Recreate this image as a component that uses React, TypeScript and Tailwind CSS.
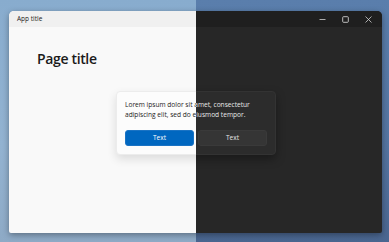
import React from "react";

function Scene({ dark }: { dark: boolean }) {
  return (
    <div
      className={
        "w-[389px] h-[242px] pt-[11px] pl-[9px] " +
        (dark
          ? "bg-[linear-gradient(180deg,#5a7eac_0%,#5474a0_60%,#4a6690_100%)]"
          : "bg-[linear-gradient(180deg,#88acce_0%,#93b3d1_60%,#8eaac6_100%)]")
      }
      style={{ fontFamily: '"Segoe UI", "Open Sans", "Noto Sans", sans-serif' }}
    >
      <div
        className={
          "w-[373px] h-[222px] rounded-t-[5px] rounded-b-[2px] overflow-hidden flex flex-col shadow-[0_2px_6px_rgba(0,0,0,0.35)] " +
          (dark ? "bg-[#272727]" : "bg-[#f9f9f9]")
        }
      >
        <div
          className={
            "h-[16px] flex items-center pl-[8px] shrink-0 " +
            (dark ? "bg-[#1f1f1f] text-[#e6e6e6]" : "bg-[#f0f0f0] text-[#1a1a1a]")
          }
        >
          <span className="text-[6.5px] leading-none">App title</span>
          <div className="ml-auto flex items-center h-full">
            <div className="w-[23px] h-full flex items-center justify-center">
              <svg width="7" height="7" viewBox="0 0 7 7">
                <path d="M0.5 3.5H6.5" stroke={dark ? "#d0d0d0" : "#333"} strokeWidth="0.8" />
              </svg>
            </div>
            <div className="w-[23px] h-full flex items-center justify-center">
              <svg width="7" height="7" viewBox="0 0 7 7">
                <rect x="0.7" y="0.7" width="5.6" height="5.6" rx="0.8" fill="none" stroke={dark ? "#d0d0d0" : "#333"} strokeWidth="0.9" />
              </svg>
            </div>
            <div className="w-[23px] h-full flex items-center justify-center mr-[2px]">
              <svg width="7" height="7" viewBox="0 0 7 7">
                <path d="M0.5 0.5L6.5 6.5M6.5 0.5L0.5 6.5" stroke={dark ? "#d0d0d0" : "#333"} strokeWidth="0.8" />
              </svg>
            </div>
          </div>
        </div>
        <div className="flex-1 flex flex-col">
          <div
            className={
              "pl-[28px] pt-[22px] text-[14px] leading-[20px] font-semibold tracking-[-0.35px] " +
              (dark ? "text-white" : "text-[#1b1b1b]")
            }
          >
            Page title
          </div>
          <div
            className={
              "mt-[22px] ml-[107px] w-[160px] h-[64px] rounded-[4px] p-[8px] flex flex-col " +
              (dark
                ? "bg-[#2c2c2c] border border-[#333] shadow-[0_4px_10px_rgba(0,0,0,0.35)]"
                : "bg-[#fcfcfc] border border-[#ececec] shadow-[0_4px_10px_rgba(0,0,0,0.12)]")
            }
          >
            <p
              className={
                "text-[6.6px] leading-[10px] " + (dark ? "text-[#e8e8e8]" : "text-[#1b1b1b]")
              }
            >
              Lorem ipsum dolor sit amet, consectetur adipiscing elit, sed do eiusmod tempor.
            </p>
            <div className="mt-auto flex gap-[4px]">
              <button
                className={
                  "w-[70px] h-[16px] rounded-[3px] text-[6.5px] leading-none " +
                  (dark ? "bg-[#4cc2ff] text-black" : "bg-[#0067c0] text-white border border-[#1a73c4]")
                }
              >
                Text
              </button>
              <button
                className={
                  "w-[70px] h-[16px] rounded-[3px] text-[6.5px] leading-none " +
                  (dark ? "bg-[#353535] text-[#e6e6e6] border border-[#3a3a3a]" : "bg-white text-[#1b1b1b] border border-[#e5e5e5]")
                }
              >
                Text
              </button>
            </div>
          </div>
        </div>
      </div>
    </div>
  );
}

export default function App() {
  return (
    <div className="relative w-[389px] h-[242px] overflow-hidden">
      <Scene dark={false} />
      <div className="absolute inset-0 [clip-path:inset(0_0_0_196px)]">
        <Scene dark />
      </div>
    </div>
  );
}
